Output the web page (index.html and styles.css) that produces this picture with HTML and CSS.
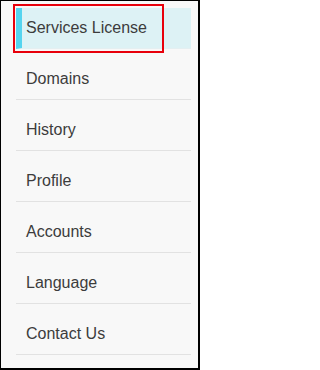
FILE: index.html
```html
<!DOCTYPE html>
<html lang="en">
<head>
<meta charset="utf-8">
<title>Menu</title>
<link rel="stylesheet" href="styles.css">
</head>
<body>
<div class="frame">
  <ul class="menu">
    <li class="item active">Services License</li>
    <li class="item">Domains</li>
    <li class="item">History</li>
    <li class="item">Profile</li>
    <li class="item">Accounts</li>
    <li class="item">Language</li>
    <li class="item">Contact Us</li>
  </ul>
  <div class="highlight"></div>
</div>
</body>
</html>
```

FILE: styles.css
```css
html, body {
  margin: 0;
  padding: 0;
}
body {
  width: 200px;
  height: 370px;
  font-family: "Liberation Sans", Arial, sans-serif;
}
.frame {
  position: relative;
  box-sizing: border-box;
  width: 200px;
  height: 370px;
  background: #f8f8f8;
  border-style: solid;
  border-color: #000;
  border-width: 1px 2px 2px 1px;
  padding: 7px 7px 0 15px;
}
.menu {
  list-style: none;
  margin: 0;
  padding: 0;
}
.item {
  padding: 10px 0 10px 10px;
  line-height: 20px;
  font-size: 16px;
  color: #3c3c3c;
  border-bottom: 1px solid #e2e2e2;
}
.item + .item {
  margin-top: 10px;
}
.item.active {
  background: #ddf2f5;
  border-left: 6px solid #55d4ef;
  padding-left: 4px;
  border-bottom-color: #e4eff1;
}
.highlight {
  position: absolute;
  left: 12px;
  top: 3px;
  width: 147px;
  height: 45px;
  border: 2px solid #e8000b;
}
```
